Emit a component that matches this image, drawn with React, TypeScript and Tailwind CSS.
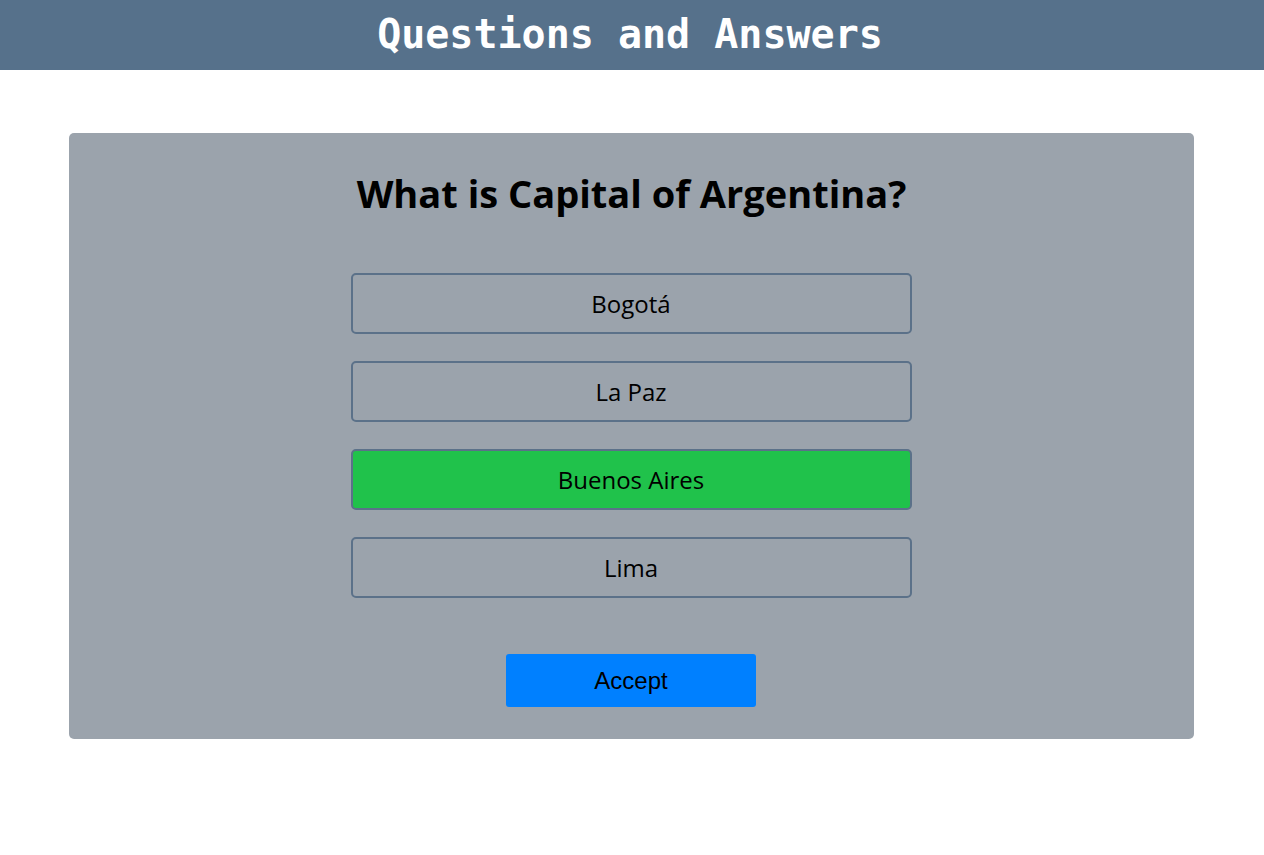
import React, { useState } from 'react'

const options = ['Bogotá', 'La Paz', 'Buenos Aires', 'Lima']

export default function App() {
  const [selected, setSelected] = useState('Buenos Aires')

  return (
    <div className="min-h-screen bg-white">
      {/* Header */}
      <header className="h-[70px] bg-[#56718b] flex items-center justify-center pb-[3px] pr-[4px]">
        <h1 className="text-[40px] font-bold text-white font-['DejaVu_Sans_Mono',monospace]">
          Questions and Answers
        </h1>
      </header>

      {/* Question card */}
      <div className="ml-[69px] mt-[63px] w-[1125px] rounded-[5px] bg-[#9ba3ac] pt-[30px] pb-[32px] flex flex-col items-center">
        <h2 className="text-[38px] font-bold text-black font-['Open_Sans',sans-serif] leading-[60px]">
          What is Capital of Argentina?
        </h2>

        <div className="mt-[50px] flex flex-col gap-[27px] pr-[1px]">
          {options.map((opt) => (
            <button
              key={opt}
              onClick={() => setSelected(opt)}
              className={
                'w-[561px] h-[61px] rounded-[5px] border-2 border-[#5b7189] pt-[1px] text-[24px] text-black font-["Open_Sans",sans-serif] ' +
                (selected === opt ? 'bg-[#20c24b]' : 'bg-transparent')
              }
            >
              {opt}
            </button>
          ))}
        </div>

        <button className="mt-[56px] mr-[1px] w-[250px] h-[53px] rounded-[3px] bg-[#0080ff] text-[24px] text-black font-['Liberation_Sans',Arial,sans-serif]">
          Accept
        </button>
      </div>
    </div>
  )
}
